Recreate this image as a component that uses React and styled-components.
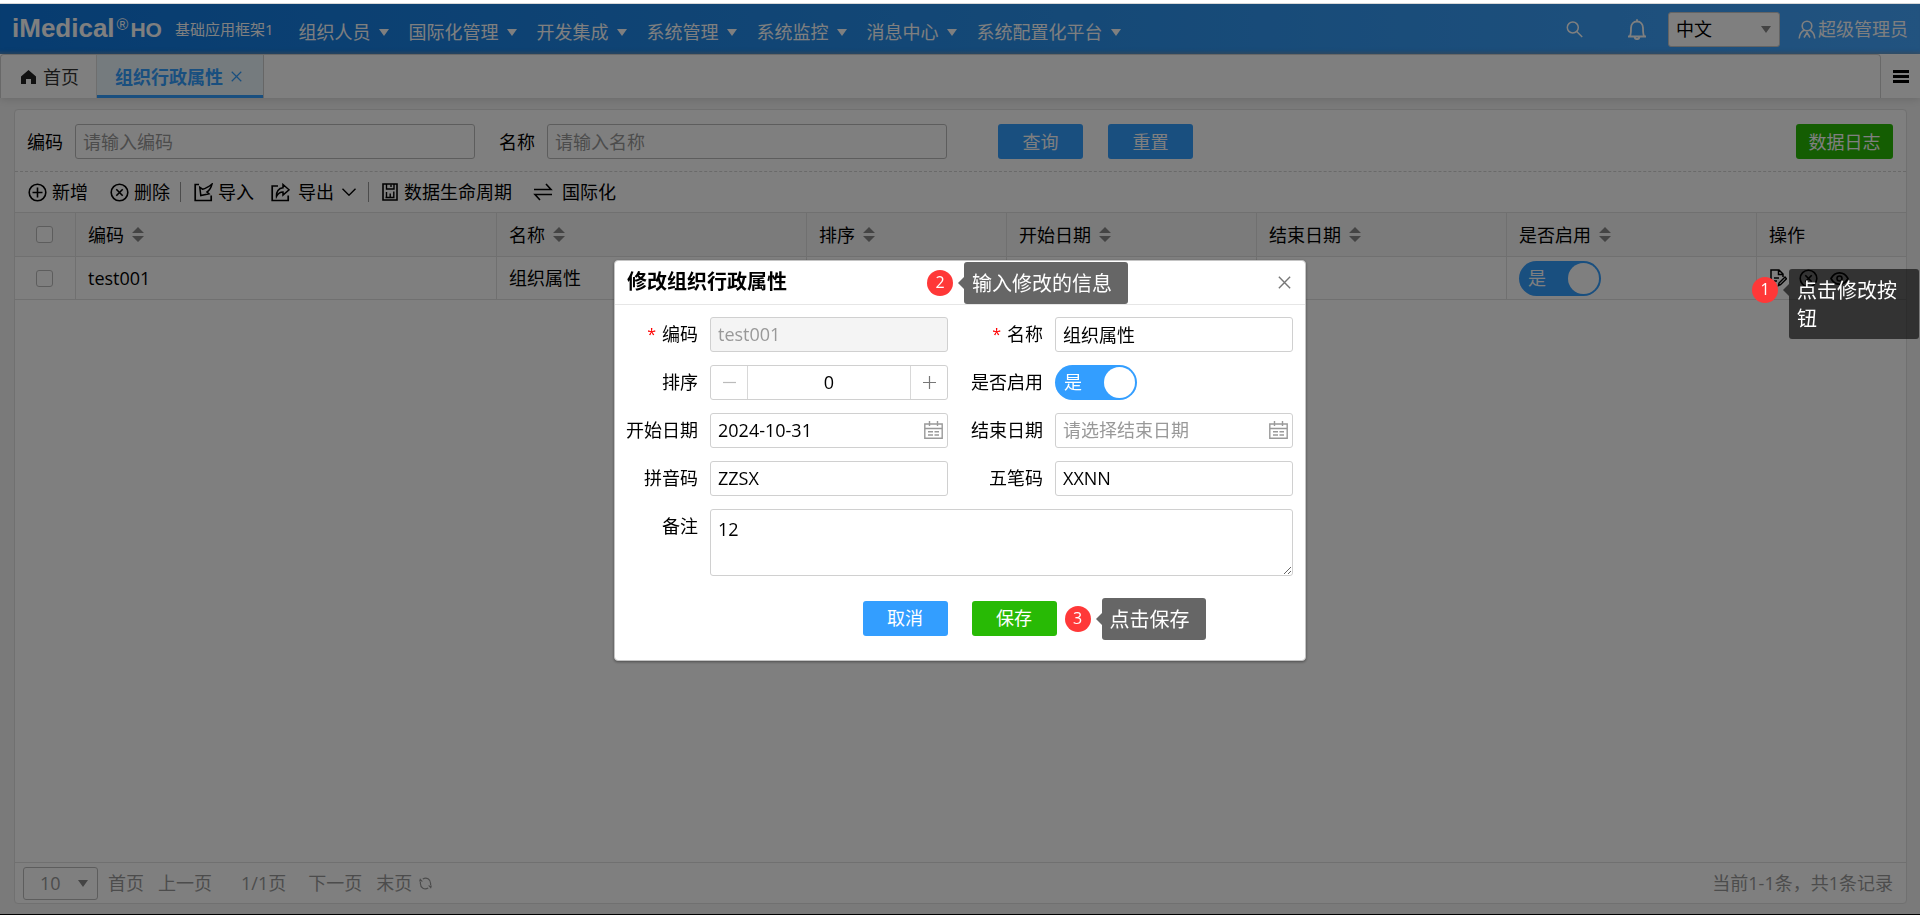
import React, { useState } from 'react';
import styled, { createGlobalStyle, css } from 'styled-components';

const GlobalStyle = createGlobalStyle`
  * {
    box-sizing: border-box;
  }
  body {
    margin: 0;
    background: #f4f4f4;
    color: #000;
  }
  body, input, button, select, textarea {
    font-family: 'Open Sans', 'Noto Sans CJK SC', sans-serif;
    font-size: 18px;
    font-weight: 400;
    line-height: 24px;
  }
  svg {
    display: block;
    flex: none;
  }
`;

const Page = styled.div`
  display: flex;
  flex-direction: column;
  min-height: 100vh;
  border-top: 3px solid #fff;
  border-bottom: 1px solid #000;
`;

const Mask = styled.div`
  position: fixed;
  inset: 4px 0 1px;
  z-index: 10;
  background: rgba(0, 0, 0, 0.5);
`;

/* header */

const Header = styled.header`
  display: flex;
  align-items: center;
  height: 51px;
  padding: 0 12px 0 12px;
  border-top: 1px solid #d8d8d8;
  color: #fff;
  background: linear-gradient(90deg, #0e78e0 0%, #2a92ee 55%, #44a6ff 100%);
  box-shadow: inset 0 -4px 3px -2px rgba(150, 160, 170, 0.5);
`;

const Brand = styled.h1`
  display: flex;
  align-items: flex-start;
  gap: 2px;
  margin: 0;
  font-family: 'Liberation Sans', Arial, sans-serif;
  font-size: 26px;
  font-weight: 700;
  line-height: 26px;
`;

const Registered = styled.sup`
  font-size: 16px;
  font-weight: 400;
  line-height: 20px;
`;

const BrandSuffix = styled.span`
  font-size: 21px;
  line-height: 29px;
`;

const SubTitle = styled.span`
  margin-left: 13px;
  font-size: 15px;
`;

const Nav = styled.nav`
  display: flex;
  flex: 1;
  gap: 19px;
  padding-top: 6px;
  margin-left: 25px;
`;

const NavItem = styled.a`
  display: flex;
  align-items: center;
  gap: 9px;
  color: inherit;
  text-decoration: none;
  white-space: nowrap;
`;

const Caret = styled.i`
  width: 0;
  height: 0;
  border: 5px solid transparent;
  border-top: 7px solid currentColor;
  border-bottom: 0;
`;

const HeaderTools = styled.div`
  display: flex;
  align-items: center;
`;

const IconButton = styled.button`
  display: flex;
  align-items: center;
  justify-content: center;
  padding: 0;
  border: 0;
  background: none;
  color: inherit;
  cursor: pointer;
`;

const SearchButton = styled(IconButton)`
  margin-right: 44px;
`;

const BellButton = styled(IconButton)`
  margin-right: 21px;
`;

const SelectWrap = styled.div`
  position: relative;
  display: flex;
  align-items: center;
  color: ${({ $color }) => $color || '#000'};

  ${Caret} {
    position: absolute;
    right: ${({ $caretRight }) => $caretRight}px;
    color: ${({ $caretColor }) => $caretColor};
    pointer-events: none;
  }
`;

const Select = styled.select`
  width: ${({ $width }) => $width}px;
  height: ${({ $height }) => $height}px;
  padding: 0 ${({ $pad }) => $pad}px;
  border: 1px solid ${({ $border }) => $border};
  border-radius: 3px;
  background: #fff;
  color: inherit;
  appearance: none;
`;

const User = styled.a`
  display: flex;
  align-items: center;
  gap: 2px;
  margin-left: 18px;
  color: inherit;
  text-decoration: none;
`;

/* tabs */

const TabBar = styled.div`
  display: flex;
  height: 44px;
  background: #fff;
  box-shadow: 0 1px 8px rgba(0, 0, 0, 0.14);
`;

const TabList = styled.div`
  display: flex;
  flex: 1;
  border: 1px solid #d0d0d0;
  border-bottom: 0;
  border-radius: 4px 4px 0 0;
`;

const Tab = styled.div`
  display: flex;
  align-items: center;
  gap: 7px;
  padding: 0 17px 0 20px;
  color: #333;

  ${({ $active }) => $active && css`
    gap: 8px;
    padding: 0 21px 0 18px;
    border-left: 1px solid #ddd;
    border-right: 1px solid #ccc;
    background: #eaf6fc;
    box-shadow: inset 0 -3px #339eff;
    color: #339eff;
    font-weight: 700;
  `}
`;

const TabMenu = styled(IconButton)`
  width: 39px;
  color: #000;
`;

/* main panel */

const Panel = styled.main`
  display: flex;
  flex: 1;
  flex-direction: column;
  margin: 11px 13px 10px 14px;
  border: 1px solid #e0e0e0;
  border-radius: 4px;
  background: #fff;
`;

const SearchForm = styled.form`
  display: flex;
  align-items: center;
  height: 62px;
  padding: 2px 13px 0 12px;
  border-bottom: 1px dashed #d4d4d4;
`;

const SearchField = styled.label`
  display: flex;
  flex: 0 1 448px;
  align-items: center;
  gap: 12px;
  margin-right: 24px;
  white-space: nowrap;
`;

const inputStyle = css`
  width: 100%;
  min-width: 0;
  height: 35px;
  padding: 0 7px;
  border: 1px solid ${({ $dark }) => ($dark ? '#bbb' : '#d0d0d0')};
  border-radius: 3px;
  background: #fff;
  color: #000;
  outline: none;

  &::placeholder {
    color: #999;
    opacity: 1;
  }
  &:disabled {
    background: #f4f4f4;
    color: #999;
  }
`;

const Input = styled.input`
  ${inputStyle}
`;

const Button = styled.button`
  width: ${({ $width }) => $width || 85}px;
  height: 35px;
  padding: 0;
  border: 0;
  border-radius: 3px;
  background: ${({ $green }) => ($green ? '#28ba05' : '#339eff')};
  color: #fff;
  cursor: pointer;
`;

const SearchButtons = styled.div`
  display: flex;
  flex: 1;
  gap: 25px;
  margin-left: 27px;
`;

const Toolbar = styled.div`
  display: flex;
  align-items: center;
  height: 40px;
  padding-left: 13px;
`;

const ToolButton = styled(IconButton)`
  gap: ${({ $gap }) => $gap || 5}px;
  margin-right: ${({ $after }) => $after || 0}px;
`;

const Divider = styled.span`
  width: 1px;
  height: 20px;
  margin-right: 13px;
  background: #999;
`;

const Table = styled.table`
  width: 100%;
  table-layout: fixed;
  border-spacing: 0;
  border-top: 1px solid #e0e0e0;
`;

const cellStyle = css`
  padding: 0 0 0 12px;
  border-right: 1px solid #e0e0e0;
  border-bottom: 1px solid #e0e0e0;
  text-align: left;
  font-weight: 400;
`;

const Th = styled.th`
  ${cellStyle}
  height: 44px;
  background: #f6f6f6;
`;

const Td = styled.td`
  ${cellStyle}
  position: relative;
  height: 43px;
`;

const HeadLabel = styled.span`
  display: flex;
  align-items: center;
  gap: 8px;
`;

const Check = styled.input`
  display: block;
  width: 17px;
  height: 17px;
  margin: 0 0 0 9px;
  border: 1px solid #bbb;
  border-radius: 3px;
  background: #fff;
  appearance: none;
`;

const Actions = styled.div`
  display: flex;
  align-items: center;
  gap: 12px;
`;

const Pager = styled.footer`
  display: flex;
  align-items: center;
  height: 41px;
  margin-top: auto;
  padding: 0 13px 0 8px;
  border-top: 1px solid #e0e0e0;
  color: #999;
`;

const PageLink = styled.button`
  margin-left: ${({ $before }) => $before}px;
  padding: 0;
  border: 0;
  background: none;
  color: inherit;
`;

const PageCount = styled.span`
  margin: 0 8px 0 29px;
`;

const Total = styled.span`
  margin-left: auto;
`;

/* switch */

const SwitchTrack = styled.label`
  display: flex;
  align-items: center;
  justify-content: space-between;
  width: 82px;
  height: 35px;
  padding: 0 2px 0 9px;
  border-radius: 18px;
  background: ${({ $on }) => ($on ? '#339eff' : '#bbb')};
  color: #fff;
  cursor: pointer;

  &::after {
    content: '';
    width: 31px;
    height: 31px;
    border-radius: 50%;
    background: #fff;
  }
`;

const SwitchInput = styled.input`
  position: absolute;
  width: 1px;
  height: 1px;
  margin: 0;
  opacity: 0;
`;

/* dialog */

const DialogLayer = styled.div`
  position: fixed;
  inset: 5px 0 0;
  z-index: 11;
  display: flex;
  align-items: center;
  justify-content: center;
`;

const Dialog = styled.section`
  width: 692px;
  border: 1px solid #c4c4c4;
  border-radius: 4px;
  background: #fff;
  box-shadow: 0 1px 3px rgba(0, 0, 0, 0.4);
`;

const DialogHeader = styled.div`
  position: relative;
  display: flex;
  align-items: center;
  justify-content: space-between;
  height: 44px;
  padding: 0 14px 0 12px;
  border-bottom: 1px solid #e6e6e6;
`;

const DialogTitle = styled.h2`
  margin: 0;
  font-size: 20px;
  font-weight: 700;
  line-height: 28px;
`;

const DialogClose = styled(IconButton)`
  color: #777;
`;

const EditForm = styled.form`
  display: grid;
  grid-template-columns: 72px minmax(0, 1fr) 83px minmax(0, 1fr);
  gap: 13px 12px;
  padding: 12px 12px 24px 11px;
`;

const FormLabel = styled.label`
  display: flex;
  align-items: center;
  align-self: start;
  justify-content: flex-end;
  gap: 6px;
  height: 35px;
  white-space: nowrap;
`;

const Required = styled.span`
  color: #f00;
  font-size: 16px;
`;

const Control = styled.div`
  position: relative;
  display: flex;
  align-items: center;
`;

const DateIcon = styled.button`
  position: absolute;
  right: 5px;
  padding: 0;
  border: 0;
  background: none;
  color: #999;
`;

const Spinner = styled.div`
  display: flex;
  width: 100%;
  height: 35px;
  border: 1px solid #d0d0d0;
  border-radius: 3px;
`;

const SpinInput = styled.input`
  flex: 1;
  min-width: 0;
  padding: 0;
  border: solid #d8d8d8;
  border-width: 0 1px;
  text-align: center;
`;

const SpinButton = styled(IconButton)`
  width: 36px;
  color: ${({ disabled }) => (disabled ? '#bbb' : '#777')};
`;

const Remark = styled.textarea`
  ${inputStyle}
  grid-column: span 3;
  height: 67px;
  padding-top: 7px;
  resize: vertical;
`;

const DialogButtons = styled.div`
  display: flex;
  grid-column: 1 / -1;
  justify-content: center;
  gap: 24px;
  padding-top: 12px;
`;

const Anchor = styled.div`
  position: relative;
`;

/* guide steps */

const StepBox = styled.div`
  position: absolute;
  top: ${({ $top }) => $top}px;
  left: ${({ $left }) => $left};
  z-index: 12;
  display: flex;
  align-items: flex-start;
  gap: 11px;
  color: #fff;
`;

const StepNumber = styled.span`
  width: 26px;
  height: 26px;
  margin-top: 8px;
  border-radius: 50%;
  background: #ff3838;
  font-size: 16px;
  text-align: center;
`;

const StepText = styled.span`
  position: relative;
  width: max-content;
  max-width: ${({ $wrap }) => ($wrap ? '130px' : 'none')};
  padding: 8px 16px 6px 8px;
  border-radius: 3px;
  background: rgba(0, 0, 0, 0.6);
  font-size: 20px;
  line-height: 28px;
  white-space: ${({ $wrap }) => ($wrap ? 'normal' : 'nowrap')};

  &::before {
    content: '';
    position: absolute;
    top: 15px;
    right: 100%;
    border: 6px solid transparent;
    border-right: 6px solid rgba(0, 0, 0, 0.6);
    border-left: 0;
  }
`;

const Svg = ({ w = 19, h = w, box = '0 0 19 19', sw = 1.6, children }) => (
  <svg
    width={w}
    height={h}
    viewBox={box}
    fill="none"
    stroke="currentColor"
    strokeWidth={sw}
    aria-hidden="true"
  >
    {children}
  </svg>
);

const AddIcon = () => (
  <Svg>
    <circle cx="9.5" cy="9.5" r="8.3" />
    <path d="M9.5 4.5v10M4.5 9.5h10" />
  </Svg>
);

const RemoveIcon = () => (
  <Svg>
    <circle cx="9.5" cy="9.5" r="8.3" />
    <path d="M6.3 6.3l6.4 6.4M12.7 6.3l-6.4 6.4" />
  </Svg>
);

const ImportIcon = () => (
  <Svg sw={1.7}>
    <path d="M5 1.500H1.200v16h16v-5" />
    <path d="M18 1C17 5 15.500 7.500 13 9l2 1.800-8.200 1.700L5.800 4.300l2.700 1.900C12 5.500 15 3.500 18 1z" strokeWidth="1.5" />
  </Svg>
);

const ExportIcon = () => (
  <Svg sw={1.7}>
    <path d="M7 3H1.200v14.500h16v-5" />
    <path d="M12 1.500l6 5.300-6 5.200V9C9 9 7 10.500 5.500 13.500 5.200 9 7.500 5 12 4.800z" strokeWidth="1.5" />
  </Svg>
);

const DataIcon = () => (
  <Svg w={16} h={18} box="0 0 16 18" sw={1.6}>
    <path d="M1 1h14v16H1z" />
    <path d="M4.500 1v5h7.500V1M9 1.500V4M4.500 9v5.500M3.500 14.500h9M8.200 10.500v4M11.800 8.500v6" strokeWidth="1.4" />
  </Svg>
);

const SwapIcon = () => (
  <Svg w={20} h={18} box="0 0 20 18">
    <path d="M1 6.500h17L13 1M19 11.500H2l5 5.500" />
  </Svg>
);

const CloseIcon = ({ size }) => (
  <Svg w={size} box="0 0 12 12" sw={1.3}>
    <path d="M.8.8l10.400 10.400M11.200.8L.8 11.200" />
  </Svg>
);

const CalendarIcon = () => (
  <Svg w={19} h={18} box="0 0 19 18" sw={1.4}>
    <path d="M.8 3h17.400v14.200H.8zM.8 7.500h17.400M5.500 0v5M13.500 0v5M4 10.800h5M10.500 10.800h4.500M4 14h5M10.500 14h4.500" />
  </Svg>
);

const RefreshIcon = () => (
  <Svg w={13} box="0 0 13 13" sw={1.2}>
    <path d="M3.800 2C7.500-.2 11.600 2.300 11.600 6.500V8M9.200 11C5.500 13.200 1.400 10.700 1.400 6.500V5" />
    <path d="M9 8.500h4l-1 3.200zM4 4.500H0l1-3.200z" fill="currentColor" stroke="none" />
  </Svg>
);

const SortIcon = () => (
  <svg width="12" height="15" viewBox="0 0 12 15" fill="#888" aria-hidden="true">
    <path d="M6 0l6 6H0zM0 9h12l-6 6z" />
  </svg>
);

const Step = ({ no, top, left, wrap, children }) => (
  <StepBox $top={top} $left={left}>
    <StepNumber>{no}</StepNumber>
    <StepText $wrap={wrap}>{children}</StepText>
  </StepBox>
);

const Switch = ({ id, label }) => {
  const [on, setOn] = useState(true);
  return (
    <SwitchTrack $on={on}>
      <SwitchInput
        id={id}
        type="checkbox"
        role="switch"
        aria-label={label}
        checked={on}
        onChange={(e) => setOn(e.target.checked)}
      />
      {on ? '是' : '否'}
    </SwitchTrack>
  );
};

const menus = ['组织人员', '国际化管理', '开发集成', '系统管理', '系统监控', '消息中心', '系统配置化平台'];

const columns = [
  { title: '编码', width: 421 },
  { title: '名称', width: 310 },
  { title: '排序', width: 200 },
  { title: '开始日期', width: 250 },
  { title: '结束日期', width: 250 },
  { title: '是否启用', width: 250 },
];

const TopHeader = () => (
  <Header>
    <Brand>
      iMedical<Registered>®</Registered>
      <BrandSuffix>HO</BrandSuffix>
    </Brand>
    <SubTitle>基础应用框架1</SubTitle>
    <Nav>
      {menus.map((menu) => (
        <NavItem href="#" key={menu}>
          {menu}
          <Caret />
        </NavItem>
      ))}
    </Nav>
    <HeaderTools>
      <SearchButton aria-label="搜索">
        <Svg w={17} box="0 0 17 17" sw={1.5}>
          <circle cx="6.800" cy="6.500" r="5.500" />
          <path d="M10.700 10.500l5.500 5.500" />
        </Svg>
      </SearchButton>
      <BellButton aria-label="消息">
        <Svg w={20} h={21} box="0 0 20 21" sw={1.8}>
          <path d="M1 17.500h18M3 17c1-2 1-4 1-8 0-4 2.500-6.500 6-6.500S16 5 16 9c0 4 0 6 1 8M10 .3v2.200M7.500 18c.3 1.500 1.200 2.200 2.500 2.200s2.200-.7 2.500-2.200" />
        </Svg>
      </BellButton>
      <SelectWrap $caretRight={9} $caretColor="#888">
        <Select $width={112} $height={35} $pad={7} $border="#c8c8c8" aria-label="语言">
          <option>中文</option>
        </Select>
        <Caret />
      </SelectWrap>
      <User href="#">
        <Svg w={18} h={19} box="0 0 18 19">
          <circle cx="9" cy="6" r="4.800" />
          <path d="M6.500 10C3.500 11.500 1.500 14 1.200 18.500M11.500 10c3 1.500 5 4 5.300 8.500M6 17.500l3-5 3 5" />
        </Svg>
        超级管理员
      </User>
    </HeaderTools>
  </Header>
);

const Tabs = () => (
  <TabBar>
    <TabList>
      <Tab>
        <svg width="15" height="14" viewBox="0 0 15 14" fill="#222" aria-hidden="true">
          <path d="M7.500 0L15 6.500V14H10V9H5v5H0V6.500z" />
        </svg>
        首页
      </Tab>
      <Tab $active>
        组织行政属性
        <IconButton aria-label="关闭">
          <CloseIcon size={11} />
        </IconButton>
      </Tab>
    </TabList>
    <TabMenu aria-label="菜单">
      <Svg w={16} h={13} box="0 0 16 13" sw={3}>
        <path d="M0 1.500h16M0 6.500h16M0 11.500h16" />
      </Svg>
    </TabMenu>
  </TabBar>
);

const DataTable = () => (
  <Table>
    <colgroup>
      <col width="61" />
      {columns.map((col) => (
        <col width={col.width} key={col.title} />
      ))}
      <col width="150" />
    </colgroup>
    <thead>
      <tr>
        <Th>
          <Check type="checkbox" aria-label="全选" />
        </Th>
        {columns.map((col) => (
          <Th key={col.title}>
            <HeadLabel>
              {col.title}
              <SortIcon />
            </HeadLabel>
          </Th>
        ))}
        <Th>操作</Th>
      </tr>
    </thead>
    <tbody>
      <tr>
        <Td>
          <Check type="checkbox" aria-label="选择" />
        </Td>
        <Td>test001</Td>
        <Td>组织属性</Td>
        <Td />
        <Td />
        <Td />
        <Td>
          <Switch label="是否启用" />
        </Td>
        <Td>
          <Actions>
            <IconButton aria-label="修改">
              <Svg w={18} box="0 0 18 18" sw={1.5}>
                <path d="M6 16.500H2V1h8l4 4v3M9.500 1v4.500H14M5 9h5M5 12h3M9.500 16.500l.5-2.500 6-6 1.500 1.700-6 6z" />
              </Svg>
            </IconButton>
            <IconButton aria-label="删除">
              <RemoveIcon />
            </IconButton>
            <IconButton aria-label="查看">
              <Svg w={19} h={13} box="0 0 19 13">
                <path d="M1 6.500C5-1 14-1 18 6.500 14 14 5 14 1 6.500z" />
                <circle cx="9.500" cy="6.500" r="2.500" />
              </Svg>
            </IconButton>
          </Actions>
          <Step no={1} top={12} left="-5px" wrap>点击修改按钮</Step>
        </Td>
      </tr>
    </tbody>
  </Table>
);

const EditDialog = () => (
  <DialogLayer>
    <Dialog role="dialog" aria-labelledby="dialog-title">
      <DialogHeader>
        <DialogTitle id="dialog-title">修改组织行政属性</DialogTitle>
        <DialogClose aria-label="关闭">
          <CloseIcon size={13} />
        </DialogClose>
        <Step no={2} top={1} left="312px">输入修改的信息</Step>
      </DialogHeader>
      <EditForm onSubmit={(e) => e.preventDefault()}>
        <FormLabel htmlFor="code"><Required>*</Required>编码</FormLabel>
        <Control>
          <Input id="code" defaultValue="test001" disabled />
        </Control>
        <FormLabel htmlFor="name"><Required>*</Required>名称</FormLabel>
        <Control>
          <Input id="name" defaultValue="组织属性" />
        </Control>

        <FormLabel htmlFor="sort">排序</FormLabel>
        <Control>
          <Spinner>
            <SpinButton type="button" disabled aria-label="减少">
              <Svg w={13} box="0 0 13 13" sw={1.2}><path d="M0 6.500h13" /></Svg>
            </SpinButton>
            <SpinInput id="sort" defaultValue="0" />
            <SpinButton type="button" aria-label="增加">
              <Svg w={13} box="0 0 13 13" sw={1.2}><path d="M0 6.500h13M6.500 0v13" /></Svg>
            </SpinButton>
          </Spinner>
        </Control>
        <FormLabel htmlFor="enabled">是否启用</FormLabel>
        <Control>
          <Switch id="enabled" label="是否启用" />
        </Control>

        <FormLabel htmlFor="start">开始日期</FormLabel>
        <Control>
          <Input id="start" defaultValue="2024-10-31" />
          <DateIcon type="button" aria-label="选择日期"><CalendarIcon /></DateIcon>
        </Control>
        <FormLabel htmlFor="end">结束日期</FormLabel>
        <Control>
          <Input id="end" placeholder="请选择结束日期" />
          <DateIcon type="button" aria-label="选择日期"><CalendarIcon /></DateIcon>
        </Control>

        <FormLabel htmlFor="pinyin">拼音码</FormLabel>
        <Control>
          <Input id="pinyin" defaultValue="ZZSX" />
        </Control>
        <FormLabel htmlFor="wubi">五笔码</FormLabel>
        <Control>
          <Input id="wubi" defaultValue="XXNN" />
        </Control>

        <FormLabel htmlFor="remark">备注</FormLabel>
        <Remark id="remark" defaultValue="12" />

        <DialogButtons>
          <Button type="button">取消</Button>
          <Anchor>
            <Button $green>保存</Button>
            <Step no={3} top={-3} left="calc(100% + 8px)">点击保存</Step>
          </Anchor>
        </DialogButtons>
      </EditForm>
    </Dialog>
  </DialogLayer>
);

const App = () => (
  <>
    <GlobalStyle />
    <Page>
      <TopHeader />
      <Tabs />
      <Panel>
        <SearchForm onSubmit={(e) => e.preventDefault()}>
          <SearchField>
            编码
            <Input $dark placeholder="请输入编码" />
          </SearchField>
          <SearchField>
            名称
            <Input $dark placeholder="请输入名称" />
          </SearchField>
          <SearchButtons>
            <Button>查询</Button>
            <Button type="reset">重置</Button>
          </SearchButtons>
          <Button type="button" $green $width={97}>数据日志</Button>
        </SearchForm>
        <Toolbar>
          <ToolButton $after={22}><AddIcon />新增</ToolButton>
          <ToolButton $after={10}><RemoveIcon />删除</ToolButton>
          <Divider />
          <ToolButton $after={17}><ImportIcon />导入</ToolButton>
          <ToolButton $gap={8} $after={12}>
            <ExportIcon />
            导出
            <Svg w={14} h={8} box="0 0 14 8" sw={1.4}><path d="M.5.8L7 7.200 13.500.8" /></Svg>
          </ToolButton>
          <Divider />
          <ToolButton $gap={6} $after={21}><DataIcon />数据生命周期</ToolButton>
          <ToolButton $gap={9}><SwapIcon />国际化</ToolButton>
        </Toolbar>
        <DataTable />
        <Pager>
          <SelectWrap $color="#999" $caretRight={10} $caretColor="#888">
            <Select $width={75} $height={33} $pad={16} $border="#bbb" aria-label="每页条数">
              <option>10</option>
            </Select>
            <Caret />
          </SelectWrap>
          <PageLink $before={10}>首页</PageLink>
          <PageLink $before={14}>上一页</PageLink>
          <PageCount>1/1页</PageCount>
          <PageLink $before={14}>下一页</PageLink>
          <PageLink $before={14}>末页</PageLink>
          <PageLink $before={7} aria-label="刷新">
            <RefreshIcon />
          </PageLink>
          <Total>当前1-1条，共1条记录</Total>
        </Pager>
      </Panel>
    </Page>
    <Mask />
    <EditDialog />
  </>
);

export default App;
